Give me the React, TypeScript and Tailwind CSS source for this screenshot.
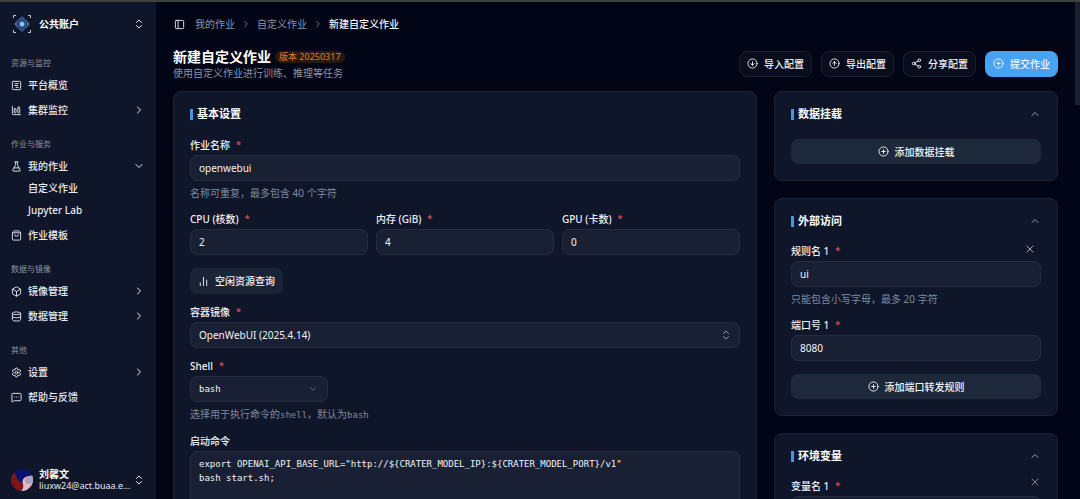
import type { ReactNode } from "react";
import {
  Box,
  ChartColumnBig,
  ChartNoAxesColumn,
  ChevronDown,
  ChevronRight,
  ChevronUp,
  ChevronsUpDown,
  CircleArrowDown,
  CircleArrowUp,
  CirclePlus,
  Database,
  FlaskConical,
  MessageSquareMore,
  PanelLeft,
  Settings,
  Share2,
  ShoppingBag,
  SquareChartGantt,
  X,
  type LucideIcon,
} from "lucide-react";

type Item = { label: string; icon: LucideIcon; arrow?: "right" | "down"; children?: string[] };
type Group = { title: string; items: Item[] };

const groups: Group[] = [
  {
    title: "资源与监控",
    items: [
      { label: "平台概览", icon: SquareChartGantt },
      { label: "集群监控", icon: ChartColumnBig, arrow: "right" },
    ],
  },
  {
    title: "作业与服务",
    items: [
      { label: "我的作业", icon: FlaskConical, arrow: "down", children: ["自定义作业", "Jupyter Lab"] },
      { label: "作业模板", icon: ShoppingBag },
    ],
  },
  {
    title: "数据与镜像",
    items: [
      { label: "镜像管理", icon: Box, arrow: "right" },
      { label: "数据管理", icon: Database, arrow: "right" },
    ],
  },
  {
    title: "其他",
    items: [
      { label: "设置", icon: Settings, arrow: "right" },
      { label: "帮助与反馈", icon: MessageSquareMore },
    ],
  },
];

function Logo() {
  return (
    <svg viewBox="0 0 36 36" className="size-[18px] shrink-0" fill="none" aria-hidden="true">
      <path d="M1 6V1h5M30 1h5v5M35 30v5h-5M6 35H1v-5" stroke="#c3cad6" strokeWidth="2" />
      <path d="M18 2l8 7H10zM18 34l8-7H10z" fill="#2f5488" />
      <path d="M2 18l8-9v18zM34 18l-8-9v18z" fill="#55657f" />
      <circle cx="18" cy="18" r="11" fill="#2b4f84" />
      <circle cx="18" cy="18" r="7" fill="#1f3c6d" />
      <circle cx="18" cy="18" r="5" fill="#8fc0f5" />
    </svg>
  );
}

function Avatar() {
  return (
    <svg viewBox="0 0 44 44" className="size-[22px] shrink-0" aria-hidden="true">
      <defs>
        <clipPath id="avatar-clip">
          <circle cx="22" cy="22" r="22" />
        </clipPath>
      </defs>
      <g clipPath="url(#avatar-clip)">
        <rect width="44" height="44" fill="#0c1170" />
        <path d="M0 8C6 4 10 10 11 16c2 8 10 11 14 14 3 5-1 10-3 14H0z" fill="#7c1619" />
        <path d="M24 30c-3-7 1-14 9-15 6-1 9-2 11-4v20L30 44H20c5-4 5-9 4-14z" fill="#e6b6c6" />
        <path d="M28 20c5-5 10-4 16-7v14c-5 2-9 5-13 2-3-2-4-6-3-9z" fill="#a9a3b8" />
      </g>
    </svg>
  );
}

function Sidebar() {
  return (
    <aside className="flex w-[156px] shrink-0 flex-col bg-[#0f1629] px-[11px] text-[#e6eaf2]">
      <button className="mt-2.5 flex h-6 items-center gap-2 pl-0.5 text-left">
        <Logo />
        <span className="flex-1 font-bold text-white">公共账户</span>
        <ChevronsUpDown className="size-3" />
      </button>
      <nav className="mt-4 flex flex-col gap-3">
        {groups.map((g) => (
          <section key={g.title}>
            <h2 className="flex h-[22px] items-center text-[8px] text-[#8c93a3]">{g.title}</h2>
            <ul className="flex flex-col gap-[3px]">
              {g.items.map((it) => (
                <li key={it.label}>
                  <a href="#" className="flex h-[22px] items-center gap-1.5 font-medium">
                    <it.icon className="size-[11px]" />
                    <span className="flex-1">{it.label}</span>
                    {it.arrow === "right" && <ChevronRight className="size-3" />}
                    {it.arrow === "down" && <ChevronDown className="size-3" />}
                  </a>
                  {it.children && (
                    <ul className="pl-[17px]">
                      {it.children.map((c) => (
                        <li key={c}>
                          <a href="#" className="flex h-[22px] items-center font-medium">
                            {c}
                          </a>
                        </li>
                      ))}
                    </ul>
                  )}
                </li>
              ))}
            </ul>
          </section>
        ))}
      </nav>
      <button className="mt-auto mb-2 flex items-center gap-1.5 text-left">
        <Avatar />
        <span className="min-w-0 flex-1 leading-[11px] whitespace-nowrap">
          <span className="block font-bold text-white">刘馨文</span>
          <span className="block text-[9px]">liuxw24@act.buaa.e...</span>
        </span>
        <ChevronsUpDown className="size-3 shrink-0" />
      </button>
    </aside>
  );
}

function Card({ title, collapsible, children }: { title: string; collapsible?: boolean; children: ReactNode }) {
  return (
    <section className="rounded-lg border border-[#1c2337] bg-[#0f1629] px-4 pt-3.5 pb-4">
      <header className="flex h-4 items-center gap-1">
        <span className="h-[11px] w-[3px] bg-[#4a94e0]" />
        <h2 className="flex-1 text-[11px] font-bold text-white">{title}</h2>
        {collapsible && (
          <button type="button" aria-label={`收起${title}`} className="text-[#9aa3b5]">
            <ChevronUp className="size-3" />
          </button>
        )}
      </header>
      <div className="mt-3 flex flex-col gap-2">{children}</div>
    </section>
  );
}

function Label({ htmlFor, required = true, children }: { htmlFor: string; required?: boolean; children: ReactNode }) {
  return (
    <label htmlFor={htmlFor} className="flex h-5 items-center gap-1.5 font-medium text-[#eef1f7]">
      {children}
      {required && <span className="text-[9px] text-[#f0525a]">*</span>}
    </label>
  );
}

const box =
  "block h-[26px] w-full appearance-none rounded-[7px] border border-[#262c3f] bg-[#1a2033] px-2 text-[#f1f4fa] outline-none";

function Field({ id, label, value, hint }: { id: string; label: string; value: string; hint?: string }) {
  return (
    <div>
      <Label htmlFor={id}>{label}</Label>
      <input id={id} defaultValue={value} className={box} />
      {hint && <p className="pt-1 leading-4 text-[#7f8aa0]">{hint}</p>}
    </div>
  );
}

function AddButton({ children }: { children: ReactNode }) {
  return (
    <div className="pt-[5px]">
      <button
        type="button"
        className="flex h-[25px] w-full items-center justify-center gap-1.5 rounded-[7px] bg-[#1d283a] font-medium text-[#f1f4fa]"
      >
        <CirclePlus className="size-[11px]" />
        {children}
      </button>
    </div>
  );
}

function ActionButton({ icon: Icon, children }: { icon: LucideIcon; children: ReactNode }) {
  return (
    <button className="flex h-[26px] items-center gap-1.5 rounded-lg border border-[#1a2032] bg-[#080c1b] px-[7px] font-medium text-[#eef1f7]">
      <Icon className="size-[11px]" />
      {children}
    </button>
  );
}

export default function App() {
  return (
    <div className="relative flex h-screen flex-col overflow-hidden bg-[#020516] font-['Noto_Sans','Noto_Sans_CJK_SC',sans-serif] text-[10px] leading-[14px]">
      <div className="h-0.5 shrink-0 bg-[#3d423d]" />
      <div className="flex min-h-0 flex-1">
        <Sidebar />
        <main className="min-w-0 flex-1 overflow-hidden pr-[22px] pl-[17px]">
          <div className="mt-[15px] flex h-3.5 items-center gap-2.5 pl-px">
            <button aria-label="切换侧边栏" className="text-[#e6eaf2]">
              <PanelLeft className="size-[11px]" />
            </button>
            <nav aria-label="面包屑" className="flex items-center gap-1.5 text-[#8a94a8]">
              <a href="#">我的作业</a>
              <ChevronRight className="size-2.5" />
              <a href="#">自定义作业</a>
              <ChevronRight className="size-2.5" />
              <span className="font-medium text-[#f1f4fa]">新建自定义作业</span>
            </nav>
          </div>

          <div className="mt-4 flex items-center justify-between">
            <div>
              <div className="flex h-[19px] items-center gap-1">
                <h1 className="text-[14px] font-bold text-white">新建自定义作业</h1>
                <span className="flex h-3 items-center rounded-full bg-[#26190f] px-1 text-[9px] text-[#e07b2c]">
                  版本 20250317
                </span>
              </div>
              <p className="text-[#8a94a8]">使用自定义作业进行训练、推理等任务</p>
            </div>
            <div className="flex items-center gap-[9px]">
              <ActionButton icon={CircleArrowDown}>导入配置</ActionButton>
              <ActionButton icon={CircleArrowUp}>导出配置</ActionButton>
              <ActionButton icon={Share2}>分享配置</ActionButton>
              <button className="flex h-[26px] items-center gap-1.5 rounded-lg bg-[#48a2f2] px-2 font-medium text-[#f4f8fd]">
                <CirclePlus className="size-[11px]" />
                提交作业
              </button>
            </div>
          </div>

          <form className="mt-[11px] grid grid-cols-[minmax(0,1fr)_284px] items-start gap-[17px]">
            <Card title="基本设置">
              <div className="pt-px">
                <Field id="name" label="作业名称" value="openwebui" hint="名称可重复，最多包含 40 个字符" />
              </div>
              <div className="grid grid-cols-3 gap-2">
                <Field id="cpu" label="CPU (核数)" value="2" />
                <Field id="mem" label="内存 (GiB)" value="4" />
                <Field id="gpu" label="GPU (卡数)" value="0" />
              </div>
              <div className="pt-[5px]">
                <button
                  type="button"
                  className="flex h-[26px] items-center gap-1.5 rounded-[7px] bg-[#1a2436] px-2 font-medium text-[#eef1f7]"
                >
                  <ChartNoAxesColumn className="size-[11px]" />
                  空闲资源查询
                </button>
              </div>
              <div>
                <Label htmlFor="image">容器镜像</Label>
                <div className="relative">
                  <select id="image" className={box}>
                    <option>OpenWebUI (2025.4.14)</option>
                  </select>
                  <ChevronsUpDown className="pointer-events-none absolute top-[7px] right-2 size-3 text-[#8a94a8]" />
                </div>
              </div>
              <div>
                <Label htmlFor="shell">Shell</Label>
                <div className="relative w-[138px]">
                  <select id="shell" className={`${box} font-['DejaVu_Sans_Mono',monospace] text-[9px]`}>
                    <option>bash</option>
                  </select>
                  <ChevronDown className="pointer-events-none absolute top-2 right-2.5 size-2.5 text-[#6b7488]" />
                </div>
                <p className="pt-1 leading-4 text-[#7f8aa0]">
                  选择用于执行命令的<code className="font-['DejaVu_Sans_Mono',monospace] text-[9px]">shell</code>
                  ，默认为<code className="font-['DejaVu_Sans_Mono',monospace] text-[9px]">bash</code>
                </p>
              </div>
              <div>
                <Label htmlFor="command" required={false}>
                  启动命令
                </Label>
                <textarea
                  id="command"
                  rows={5}
                  spellCheck={false}
                  defaultValue={
                    'export OPENAI_API_BASE_URL="http://${CRATER_MODEL_IP}:${CRATER_MODEL_PORT}/v1"\nbash start.sh;'
                  }
                  className="block w-full resize-none rounded-[7px] border border-[#262c3f] bg-[#1a2033] px-2 py-[5px] font-['DejaVu_Sans_Mono',monospace] text-[9px] leading-[14px] text-[#f1f4fa] outline-none"
                />
              </div>
            </Card>

            <div className="flex flex-col gap-[17px]">
              <Card title="数据挂载" collapsible>
                <AddButton>添加数据挂载</AddButton>
              </Card>
              <Card title="外部访问" collapsible>
                <div className="relative">
                  <Field id="rule" label="规则名 1" value="ui" hint="只能包含小写字母，最多 20 字符" />
                  <button type="button" aria-label="删除规则 1" className="absolute top-0.5 right-[5px] text-[#a3abbb]">
                    <X className="size-3" />
                  </button>
                </div>
                <Field id="port" label="端口号 1" value="8080" />
                <AddButton>添加端口转发规则</AddButton>
              </Card>
              <Card title="环境变量" collapsible>
                <div className="relative">
                  <Field id="env-name" label="变量名 1" value="" />
                  <button type="button" aria-label="删除变量 1" className="absolute top-0 right-0 text-[#7d8699]">
                    <X className="size-3" />
                  </button>
                </div>
              </Card>
            </div>
          </form>
        </main>
      </div>
      <div className="absolute top-0.5 right-0 h-[103px] w-[5px] bg-[#1b2031]" />
    </div>
  );
}
